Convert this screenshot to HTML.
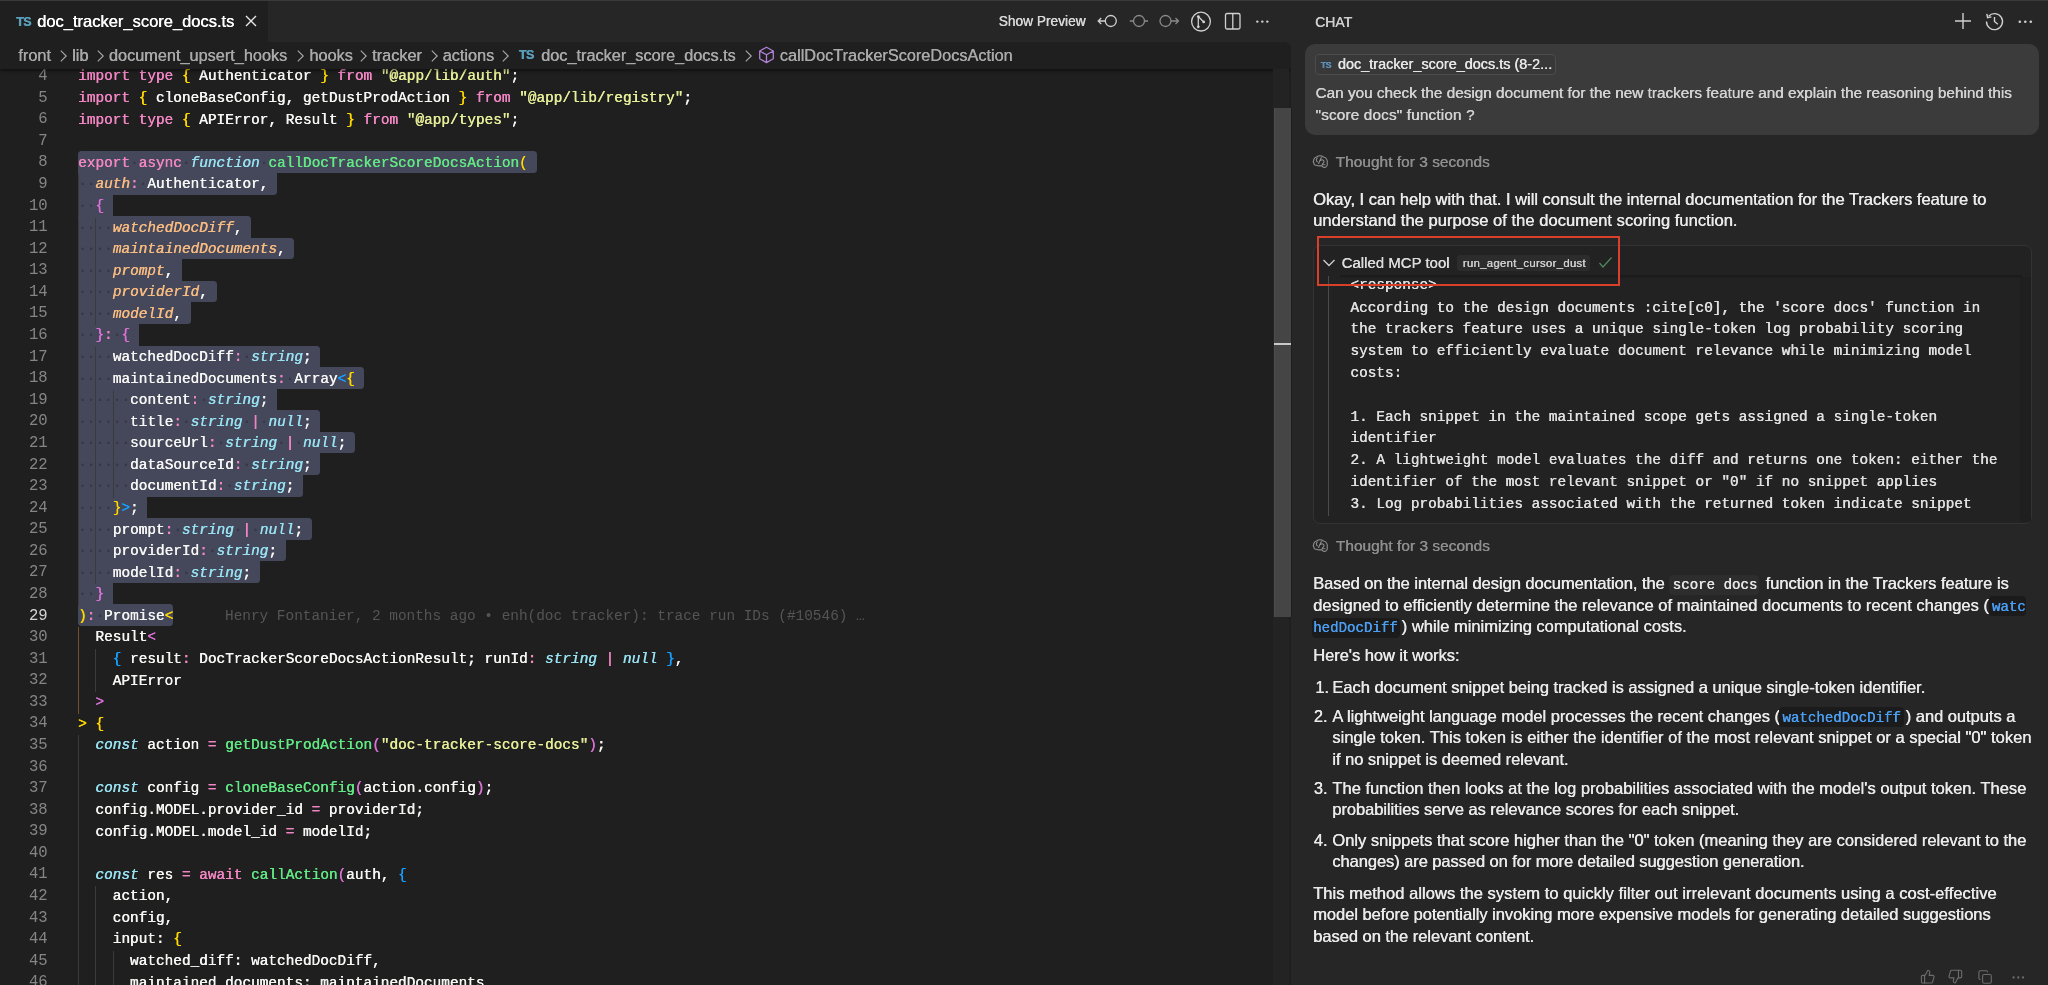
<!DOCTYPE html>
<html><head><meta charset="utf-8"><style>
*{margin:0;padding:0;box-sizing:border-box}
html,body{width:2048px;height:985px;overflow:hidden;background:#262626}
body{position:relative;font-family:"Liberation Sans",sans-serif;will-change:transform}
.t{position:absolute;white-space:pre;text-shadow:0.4px 0 0 currentColor}
.code{position:absolute;left:78.0px;white-space:pre;font-family:"Liberation Mono",monospace;font-size:14.428px;line-height:21.575px;color:#f6f6f4;text-shadow:0.4px 0 0 currentColor}
.ln{position:absolute;left:0;width:47.6px;text-align:right;white-space:pre;font-family:"Liberation Mono",monospace;font-size:15.6px;line-height:21.575px}
.ic1{font-family:"Liberation Mono",monospace;font-size:14px;background:#2e2e2e;border-radius:4px;padding:2px 4px;margin:0 2px;color:#e6e6e6}
.ic2{font-family:"Liberation Mono",monospace;font-size:14px;background:#1a1a1a;border-radius:4px;padding:2px 4px;margin:0 2px;color:#4ca2f5}
</style></head><body>
<div style="position:absolute;left:0;top:0;width:2048px;height:1px;background:#3a3a3a"></div>
<!-- active tab -->
<div style="position:absolute;left:0;top:1px;width:268px;height:42px;background:#1f1f1f"></div>
<!-- editor -->
<div id="editor" style="position:absolute;left:0;top:42px;width:1291px;height:943px;background:#1f1f1f;border-top-right-radius:8px;overflow:hidden">
  <div style="position:absolute;left:-0px;top:-42px;width:1291px;height:985px">
  <div style="position:absolute;left:78.00px;top:151.37px;width:458.82px;height:21.57px;background:#45475a;border-radius:3.5px 3.5px 3.5px 0px"></div><div style="position:absolute;left:78.00px;top:172.95px;width:199.11px;height:21.57px;background:#45475a;border-radius:0px 0px 3.5px 0px"></div><div style="position:absolute;left:78.00px;top:194.52px;width:34.63px;height:21.57px;background:#45475a;border-radius:0px 0px 0px 0px"></div><div style="position:absolute;left:78.00px;top:216.10px;width:173.14px;height:21.57px;background:#45475a;border-radius:0px 3.5px 0px 0px"></div><div style="position:absolute;left:78.00px;top:237.67px;width:216.43px;height:21.57px;background:#45475a;border-radius:0px 3.5px 3.5px 0px"></div><div style="position:absolute;left:78.00px;top:259.25px;width:103.88px;height:21.57px;background:#45475a;border-radius:0px 0px 0px 0px"></div><div style="position:absolute;left:78.00px;top:280.82px;width:138.51px;height:21.57px;background:#45475a;border-radius:0px 3.5px 3.5px 0px"></div><div style="position:absolute;left:78.00px;top:302.40px;width:112.54px;height:21.57px;background:#45475a;border-radius:0px 0px 3.5px 0px"></div><div style="position:absolute;left:78.00px;top:323.97px;width:60.60px;height:21.57px;background:#45475a;border-radius:0px 0px 0px 0px"></div><div style="position:absolute;left:78.00px;top:345.55px;width:242.40px;height:21.57px;background:#45475a;border-radius:0px 3.5px 0px 0px"></div><div style="position:absolute;left:78.00px;top:367.12px;width:285.68px;height:21.57px;background:#45475a;border-radius:0px 3.5px 3.5px 0px"></div><div style="position:absolute;left:78.00px;top:388.70px;width:199.11px;height:21.57px;background:#45475a;border-radius:0px 0px 0px 0px"></div><div style="position:absolute;left:78.00px;top:410.27px;width:242.40px;height:21.57px;background:#45475a;border-radius:0px 3.5px 0px 0px"></div><div style="position:absolute;left:78.00px;top:431.85px;width:277.02px;height:21.57px;background:#45475a;border-radius:0px 3.5px 3.5px 0px"></div><div style="position:absolute;left:78.00px;top:453.42px;width:242.40px;height:21.57px;background:#45475a;border-radius:0px 0px 3.5px 0px"></div><div style="position:absolute;left:78.00px;top:475.00px;width:225.08px;height:21.57px;background:#45475a;border-radius:0px 0px 3.5px 0px"></div><div style="position:absolute;left:78.00px;top:496.57px;width:69.26px;height:21.57px;background:#45475a;border-radius:0px 0px 0px 0px"></div><div style="position:absolute;left:78.00px;top:518.15px;width:233.74px;height:21.57px;background:#45475a;border-radius:0px 3.5px 3.5px 0px"></div><div style="position:absolute;left:78.00px;top:539.72px;width:207.77px;height:21.57px;background:#45475a;border-radius:0px 0px 3.5px 0px"></div><div style="position:absolute;left:78.00px;top:561.30px;width:181.80px;height:21.57px;background:#45475a;border-radius:0px 0px 3.5px 0px"></div><div style="position:absolute;left:78.00px;top:582.87px;width:34.63px;height:21.57px;background:#45475a;border-radius:0px 0px 0px 0px"></div><div style="position:absolute;left:78.00px;top:604.45px;width:95.23px;height:21.57px;background:#45475a;border-radius:0px 3.5px 3.5px 3.5px"></div><div style="position:absolute;left:78.00px;top:174.35px;width:1px;height:21.57px;background:#3b3b3b"></div><div style="position:absolute;left:78.00px;top:195.92px;width:1px;height:21.57px;background:#3b3b3b"></div><div style="position:absolute;left:78.00px;top:217.50px;width:1px;height:21.57px;background:#3b3b3b"></div><div style="position:absolute;left:95.31px;top:217.50px;width:1px;height:21.57px;background:#3b3b3b"></div><div style="position:absolute;left:78.00px;top:239.07px;width:1px;height:21.57px;background:#3b3b3b"></div><div style="position:absolute;left:95.31px;top:239.07px;width:1px;height:21.57px;background:#3b3b3b"></div><div style="position:absolute;left:78.00px;top:260.65px;width:1px;height:21.57px;background:#3b3b3b"></div><div style="position:absolute;left:95.31px;top:260.65px;width:1px;height:21.57px;background:#3b3b3b"></div><div style="position:absolute;left:78.00px;top:282.22px;width:1px;height:21.57px;background:#3b3b3b"></div><div style="position:absolute;left:95.31px;top:282.22px;width:1px;height:21.57px;background:#3b3b3b"></div><div style="position:absolute;left:78.00px;top:303.80px;width:1px;height:21.57px;background:#3b3b3b"></div><div style="position:absolute;left:95.31px;top:303.80px;width:1px;height:21.57px;background:#3b3b3b"></div><div style="position:absolute;left:78.00px;top:325.37px;width:1px;height:21.57px;background:#3b3b3b"></div><div style="position:absolute;left:78.00px;top:346.95px;width:1px;height:21.57px;background:#3b3b3b"></div><div style="position:absolute;left:95.31px;top:346.95px;width:1px;height:21.57px;background:#3b3b3b"></div><div style="position:absolute;left:78.00px;top:368.52px;width:1px;height:21.57px;background:#3b3b3b"></div><div style="position:absolute;left:95.31px;top:368.52px;width:1px;height:21.57px;background:#3b3b3b"></div><div style="position:absolute;left:78.00px;top:390.10px;width:1px;height:21.57px;background:#3b3b3b"></div><div style="position:absolute;left:95.31px;top:390.10px;width:1px;height:21.57px;background:#3b3b3b"></div><div style="position:absolute;left:112.63px;top:390.10px;width:1px;height:21.57px;background:#3b3b3b"></div><div style="position:absolute;left:78.00px;top:411.67px;width:1px;height:21.57px;background:#3b3b3b"></div><div style="position:absolute;left:95.31px;top:411.67px;width:1px;height:21.57px;background:#3b3b3b"></div><div style="position:absolute;left:112.63px;top:411.67px;width:1px;height:21.57px;background:#3b3b3b"></div><div style="position:absolute;left:78.00px;top:433.25px;width:1px;height:21.57px;background:#3b3b3b"></div><div style="position:absolute;left:95.31px;top:433.25px;width:1px;height:21.57px;background:#3b3b3b"></div><div style="position:absolute;left:112.63px;top:433.25px;width:1px;height:21.57px;background:#3b3b3b"></div><div style="position:absolute;left:78.00px;top:454.82px;width:1px;height:21.57px;background:#3b3b3b"></div><div style="position:absolute;left:95.31px;top:454.82px;width:1px;height:21.57px;background:#3b3b3b"></div><div style="position:absolute;left:112.63px;top:454.82px;width:1px;height:21.57px;background:#3b3b3b"></div><div style="position:absolute;left:78.00px;top:476.40px;width:1px;height:21.57px;background:#3b3b3b"></div><div style="position:absolute;left:95.31px;top:476.40px;width:1px;height:21.57px;background:#3b3b3b"></div><div style="position:absolute;left:112.63px;top:476.40px;width:1px;height:21.57px;background:#3b3b3b"></div><div style="position:absolute;left:78.00px;top:497.97px;width:1px;height:21.57px;background:#3b3b3b"></div><div style="position:absolute;left:95.31px;top:497.97px;width:1px;height:21.57px;background:#3b3b3b"></div><div style="position:absolute;left:78.00px;top:519.55px;width:1px;height:21.57px;background:#3b3b3b"></div><div style="position:absolute;left:95.31px;top:519.55px;width:1px;height:21.57px;background:#3b3b3b"></div><div style="position:absolute;left:78.00px;top:541.12px;width:1px;height:21.57px;background:#3b3b3b"></div><div style="position:absolute;left:95.31px;top:541.12px;width:1px;height:21.57px;background:#3b3b3b"></div><div style="position:absolute;left:78.00px;top:562.70px;width:1px;height:21.57px;background:#3b3b3b"></div><div style="position:absolute;left:95.31px;top:562.70px;width:1px;height:21.57px;background:#3b3b3b"></div><div style="position:absolute;left:78.00px;top:584.27px;width:1px;height:21.57px;background:#3b3b3b"></div><div style="position:absolute;left:78.00px;top:627.42px;width:1px;height:21.57px;background:#74502c"></div><div style="position:absolute;left:78.00px;top:649.00px;width:1px;height:21.57px;background:#74502c"></div><div style="position:absolute;left:95.31px;top:649.00px;width:1px;height:21.57px;background:#3b3b3b"></div><div style="position:absolute;left:78.00px;top:670.57px;width:1px;height:21.57px;background:#74502c"></div><div style="position:absolute;left:95.31px;top:670.57px;width:1px;height:21.57px;background:#3b3b3b"></div><div style="position:absolute;left:78.00px;top:692.15px;width:1px;height:21.57px;background:#74502c"></div><div style="position:absolute;left:78.00px;top:735.30px;width:1px;height:21.57px;background:#3b3b3b"></div><div style="position:absolute;left:78.00px;top:756.87px;width:1px;height:21.57px;background:#3b3b3b"></div><div style="position:absolute;left:78.00px;top:778.45px;width:1px;height:21.57px;background:#3b3b3b"></div><div style="position:absolute;left:78.00px;top:800.02px;width:1px;height:21.57px;background:#3b3b3b"></div><div style="position:absolute;left:78.00px;top:821.60px;width:1px;height:21.57px;background:#3b3b3b"></div><div style="position:absolute;left:78.00px;top:843.17px;width:1px;height:21.57px;background:#3b3b3b"></div><div style="position:absolute;left:78.00px;top:864.75px;width:1px;height:21.57px;background:#3b3b3b"></div><div style="position:absolute;left:78.00px;top:886.32px;width:1px;height:21.57px;background:#3b3b3b"></div><div style="position:absolute;left:95.31px;top:886.32px;width:1px;height:21.57px;background:#3b3b3b"></div><div style="position:absolute;left:78.00px;top:907.90px;width:1px;height:21.57px;background:#3b3b3b"></div><div style="position:absolute;left:95.31px;top:907.90px;width:1px;height:21.57px;background:#3b3b3b"></div><div style="position:absolute;left:78.00px;top:929.47px;width:1px;height:21.57px;background:#3b3b3b"></div><div style="position:absolute;left:95.31px;top:929.47px;width:1px;height:21.57px;background:#3b3b3b"></div><div style="position:absolute;left:78.00px;top:951.05px;width:1px;height:21.57px;background:#3b3b3b"></div><div style="position:absolute;left:95.31px;top:951.05px;width:1px;height:21.57px;background:#3b3b3b"></div><div style="position:absolute;left:112.63px;top:951.05px;width:1px;height:21.57px;background:#3b3b3b"></div><div style="position:absolute;left:78.00px;top:972.62px;width:1px;height:21.57px;background:#3b3b3b"></div><div style="position:absolute;left:95.31px;top:972.62px;width:1px;height:21.57px;background:#3b3b3b"></div><div style="position:absolute;left:112.63px;top:972.62px;width:1px;height:21.57px;background:#3b3b3b"></div><div class="code" style="top:66.47px"><span style="color:#f286c4">import</span><span style="color:#f6f6f4"> </span><span style="color:#f286c4">type</span><span style="color:#f6f6f4"> </span><span style="color:#ffd700">{</span><span style="color:#f6f6f4"> Authenticator </span><span style="color:#ffd700">}</span><span style="color:#f6f6f4"> </span><span style="color:#f286c4">from</span><span style="color:#f6f6f4"> </span><span style="color:#e7ee98">&quot;@app/lib/auth&quot;</span><span style="color:#f6f6f4">;</span></div><div class="ln" style="top:66.16px;color:#858585">4</div><div class="code" style="top:88.05px"><span style="color:#f286c4">import</span><span style="color:#f6f6f4"> </span><span style="color:#ffd700">{</span><span style="color:#f6f6f4"> cloneBaseConfig, getDustProdAction </span><span style="color:#ffd700">}</span><span style="color:#f6f6f4"> </span><span style="color:#f286c4">from</span><span style="color:#f6f6f4"> </span><span style="color:#e7ee98">&quot;@app/lib/registry&quot;</span><span style="color:#f6f6f4">;</span></div><div class="ln" style="top:87.74px;color:#858585">5</div><div class="code" style="top:109.62px"><span style="color:#f286c4">import</span><span style="color:#f6f6f4"> </span><span style="color:#f286c4">type</span><span style="color:#f6f6f4"> </span><span style="color:#ffd700">{</span><span style="color:#f6f6f4"> APIError, Result </span><span style="color:#ffd700">}</span><span style="color:#f6f6f4"> </span><span style="color:#f286c4">from</span><span style="color:#f6f6f4"> </span><span style="color:#e7ee98">&quot;@app/types&quot;</span><span style="color:#f6f6f4">;</span></div><div class="ln" style="top:109.31px;color:#858585">6</div><div class="code" style="top:131.20px"></div><div class="ln" style="top:130.89px;color:#858585">7</div><div class="code" style="top:152.77px"><span style="color:#f286c4">export</span><span style="color:#f6f6f4"><span style="color:#363848">·</span></span><span style="color:#f286c4">async</span><span style="color:#f6f6f4"><span style="color:#363848">·</span></span><span style="color:#97e1f1;font-style:italic">function</span><span style="color:#f6f6f4"><span style="color:#363848">·</span></span><span style="color:#62e884">callDocTrackerScoreDocsAction</span><span style="color:#ffd700">(</span></div><div class="ln" style="top:152.46px;color:#858585">8</div><div class="code" style="top:174.35px"><span style="color:#f6f6f4"><span style="color:#363848">·</span><span style="color:#363848">·</span></span><span style="color:#f7bb80;font-style:italic">auth</span><span style="color:#f286c4">:</span><span style="color:#f6f6f4"><span style="color:#363848">·</span>Authenticator,</span></div><div class="ln" style="top:174.04px;color:#858585">9</div><div class="code" style="top:195.92px"><span style="color:#f6f6f4"><span style="color:#363848">·</span><span style="color:#363848">·</span></span><span style="color:#da70d6">{</span></div><div class="ln" style="top:195.61px;color:#858585">10</div><div class="code" style="top:217.50px"><span style="color:#f6f6f4"><span style="color:#363848">·</span><span style="color:#363848">·</span><span style="color:#363848">·</span><span style="color:#363848">·</span></span><span style="color:#f7bb80;font-style:italic">watchedDocDiff</span><span style="color:#f6f6f4">,</span></div><div class="ln" style="top:217.19px;color:#858585">11</div><div class="code" style="top:239.07px"><span style="color:#f6f6f4"><span style="color:#363848">·</span><span style="color:#363848">·</span><span style="color:#363848">·</span><span style="color:#363848">·</span></span><span style="color:#f7bb80;font-style:italic">maintainedDocuments</span><span style="color:#f6f6f4">,</span></div><div class="ln" style="top:238.76px;color:#858585">12</div><div class="code" style="top:260.65px"><span style="color:#f6f6f4"><span style="color:#363848">·</span><span style="color:#363848">·</span><span style="color:#363848">·</span><span style="color:#363848">·</span></span><span style="color:#f7bb80;font-style:italic">prompt</span><span style="color:#f6f6f4">,</span></div><div class="ln" style="top:260.34px;color:#858585">13</div><div class="code" style="top:282.22px"><span style="color:#f6f6f4"><span style="color:#363848">·</span><span style="color:#363848">·</span><span style="color:#363848">·</span><span style="color:#363848">·</span></span><span style="color:#f7bb80;font-style:italic">providerId</span><span style="color:#f6f6f4">,</span></div><div class="ln" style="top:281.91px;color:#858585">14</div><div class="code" style="top:303.80px"><span style="color:#f6f6f4"><span style="color:#363848">·</span><span style="color:#363848">·</span><span style="color:#363848">·</span><span style="color:#363848">·</span></span><span style="color:#f7bb80;font-style:italic">modelId</span><span style="color:#f6f6f4">,</span></div><div class="ln" style="top:303.49px;color:#858585">15</div><div class="code" style="top:325.37px"><span style="color:#f6f6f4"><span style="color:#363848">·</span><span style="color:#363848">·</span></span><span style="color:#da70d6">}</span><span style="color:#f286c4">:</span><span style="color:#f6f6f4"><span style="color:#363848">·</span></span><span style="color:#da70d6">{</span></div><div class="ln" style="top:325.06px;color:#858585">16</div><div class="code" style="top:346.95px"><span style="color:#f6f6f4"><span style="color:#363848">·</span><span style="color:#363848">·</span><span style="color:#363848">·</span><span style="color:#363848">·</span>watchedDocDiff</span><span style="color:#f286c4">:</span><span style="color:#f6f6f4"><span style="color:#363848">·</span></span><span style="color:#97e1f1;font-style:italic">string</span><span style="color:#f6f6f4">;</span></div><div class="ln" style="top:346.64px;color:#858585">17</div><div class="code" style="top:368.52px"><span style="color:#f6f6f4"><span style="color:#363848">·</span><span style="color:#363848">·</span><span style="color:#363848">·</span><span style="color:#363848">·</span>maintainedDocuments</span><span style="color:#f286c4">:</span><span style="color:#f6f6f4"><span style="color:#363848">·</span>Array</span><span style="color:#179fff">&lt;</span><span style="color:#ffd700">{</span></div><div class="ln" style="top:368.21px;color:#858585">18</div><div class="code" style="top:390.10px"><span style="color:#f6f6f4"><span style="color:#363848">·</span><span style="color:#363848">·</span><span style="color:#363848">·</span><span style="color:#363848">·</span><span style="color:#363848">·</span><span style="color:#363848">·</span>content</span><span style="color:#f286c4">:</span><span style="color:#f6f6f4"><span style="color:#363848">·</span></span><span style="color:#97e1f1;font-style:italic">string</span><span style="color:#f6f6f4">;</span></div><div class="ln" style="top:389.79px;color:#858585">19</div><div class="code" style="top:411.67px"><span style="color:#f6f6f4"><span style="color:#363848">·</span><span style="color:#363848">·</span><span style="color:#363848">·</span><span style="color:#363848">·</span><span style="color:#363848">·</span><span style="color:#363848">·</span>title</span><span style="color:#f286c4">:</span><span style="color:#f6f6f4"><span style="color:#363848">·</span></span><span style="color:#97e1f1;font-style:italic">string</span><span style="color:#f6f6f4"><span style="color:#363848">·</span></span><span style="color:#f286c4">|</span><span style="color:#f6f6f4"><span style="color:#363848">·</span></span><span style="color:#97e1f1;font-style:italic">null</span><span style="color:#f6f6f4">;</span></div><div class="ln" style="top:411.36px;color:#858585">20</div><div class="code" style="top:433.25px"><span style="color:#f6f6f4"><span style="color:#363848">·</span><span style="color:#363848">·</span><span style="color:#363848">·</span><span style="color:#363848">·</span><span style="color:#363848">·</span><span style="color:#363848">·</span>sourceUrl</span><span style="color:#f286c4">:</span><span style="color:#f6f6f4"><span style="color:#363848">·</span></span><span style="color:#97e1f1;font-style:italic">string</span><span style="color:#f6f6f4"><span style="color:#363848">·</span></span><span style="color:#f286c4">|</span><span style="color:#f6f6f4"><span style="color:#363848">·</span></span><span style="color:#97e1f1;font-style:italic">null</span><span style="color:#f6f6f4">;</span></div><div class="ln" style="top:432.94px;color:#858585">21</div><div class="code" style="top:454.82px"><span style="color:#f6f6f4"><span style="color:#363848">·</span><span style="color:#363848">·</span><span style="color:#363848">·</span><span style="color:#363848">·</span><span style="color:#363848">·</span><span style="color:#363848">·</span>dataSourceId</span><span style="color:#f286c4">:</span><span style="color:#f6f6f4"><span style="color:#363848">·</span></span><span style="color:#97e1f1;font-style:italic">string</span><span style="color:#f6f6f4">;</span></div><div class="ln" style="top:454.51px;color:#858585">22</div><div class="code" style="top:476.40px"><span style="color:#f6f6f4"><span style="color:#363848">·</span><span style="color:#363848">·</span><span style="color:#363848">·</span><span style="color:#363848">·</span><span style="color:#363848">·</span><span style="color:#363848">·</span>documentId</span><span style="color:#f286c4">:</span><span style="color:#f6f6f4"><span style="color:#363848">·</span></span><span style="color:#97e1f1;font-style:italic">string</span><span style="color:#f6f6f4">;</span></div><div class="ln" style="top:476.09px;color:#858585">23</div><div class="code" style="top:497.97px"><span style="color:#f6f6f4"><span style="color:#363848">·</span><span style="color:#363848">·</span><span style="color:#363848">·</span><span style="color:#363848">·</span></span><span style="color:#ffd700">}</span><span style="color:#179fff">&gt;</span><span style="color:#f6f6f4">;</span></div><div class="ln" style="top:497.66px;color:#858585">24</div><div class="code" style="top:519.55px"><span style="color:#f6f6f4"><span style="color:#363848">·</span><span style="color:#363848">·</span><span style="color:#363848">·</span><span style="color:#363848">·</span>prompt</span><span style="color:#f286c4">:</span><span style="color:#f6f6f4"><span style="color:#363848">·</span></span><span style="color:#97e1f1;font-style:italic">string</span><span style="color:#f6f6f4"><span style="color:#363848">·</span></span><span style="color:#f286c4">|</span><span style="color:#f6f6f4"><span style="color:#363848">·</span></span><span style="color:#97e1f1;font-style:italic">null</span><span style="color:#f6f6f4">;</span></div><div class="ln" style="top:519.24px;color:#858585">25</div><div class="code" style="top:541.12px"><span style="color:#f6f6f4"><span style="color:#363848">·</span><span style="color:#363848">·</span><span style="color:#363848">·</span><span style="color:#363848">·</span>providerId</span><span style="color:#f286c4">:</span><span style="color:#f6f6f4"><span style="color:#363848">·</span></span><span style="color:#97e1f1;font-style:italic">string</span><span style="color:#f6f6f4">;</span></div><div class="ln" style="top:540.81px;color:#858585">26</div><div class="code" style="top:562.70px"><span style="color:#f6f6f4"><span style="color:#363848">·</span><span style="color:#363848">·</span><span style="color:#363848">·</span><span style="color:#363848">·</span>modelId</span><span style="color:#f286c4">:</span><span style="color:#f6f6f4"><span style="color:#363848">·</span></span><span style="color:#97e1f1;font-style:italic">string</span><span style="color:#f6f6f4">;</span></div><div class="ln" style="top:562.39px;color:#858585">27</div><div class="code" style="top:584.27px"><span style="color:#f6f6f4"><span style="color:#363848">·</span><span style="color:#363848">·</span></span><span style="color:#da70d6">}</span></div><div class="ln" style="top:583.96px;color:#858585">28</div><div class="code" style="top:605.85px"><span style="color:#ffd700">)</span><span style="color:#f286c4">:</span><span style="color:#f6f6f4"><span style="color:#363848">·</span>Promise</span><span style="color:#ffd700">&lt;</span></div><div class="ln" style="top:605.54px;color:#d4d4d4">29</div><div class="code" style="top:627.42px"><span style="color:#f6f6f4">  Result</span><span style="color:#da70d6">&lt;</span></div><div class="ln" style="top:627.11px;color:#858585">30</div><div class="code" style="top:649.00px"><span style="color:#f6f6f4">    </span><span style="color:#179fff">{</span><span style="color:#f6f6f4"> result</span><span style="color:#f286c4">:</span><span style="color:#f6f6f4"> DocTrackerScoreDocsActionResult; runId</span><span style="color:#f286c4">:</span><span style="color:#f6f6f4"> </span><span style="color:#97e1f1;font-style:italic">string</span><span style="color:#f6f6f4"> </span><span style="color:#f286c4">|</span><span style="color:#f6f6f4"> </span><span style="color:#97e1f1;font-style:italic">null</span><span style="color:#f6f6f4"> </span><span style="color:#179fff">}</span><span style="color:#f6f6f4">,</span></div><div class="ln" style="top:648.69px;color:#858585">31</div><div class="code" style="top:670.57px"><span style="color:#f6f6f4">    APIError</span></div><div class="ln" style="top:670.26px;color:#858585">32</div><div class="code" style="top:692.15px"><span style="color:#f6f6f4">  </span><span style="color:#da70d6">&gt;</span></div><div class="ln" style="top:691.84px;color:#858585">33</div><div class="code" style="top:713.72px"><span style="color:#ffd700">&gt;</span><span style="color:#f6f6f4"> </span><span style="color:#ffd700">{</span></div><div class="ln" style="top:713.41px;color:#858585">34</div><div class="code" style="top:735.30px"><span style="color:#f6f6f4">  </span><span style="color:#97e1f1;font-style:italic">const</span><span style="color:#f6f6f4"> action </span><span style="color:#f286c4">=</span><span style="color:#f6f6f4"> </span><span style="color:#62e884">getDustProdAction</span><span style="color:#da70d6">(</span><span style="color:#e7ee98">&quot;doc-tracker-score-docs&quot;</span><span style="color:#da70d6">)</span><span style="color:#f6f6f4">;</span></div><div class="ln" style="top:734.99px;color:#858585">35</div><div class="code" style="top:756.87px"></div><div class="ln" style="top:756.56px;color:#858585">36</div><div class="code" style="top:778.45px"><span style="color:#f6f6f4">  </span><span style="color:#97e1f1;font-style:italic">const</span><span style="color:#f6f6f4"> config </span><span style="color:#f286c4">=</span><span style="color:#f6f6f4"> </span><span style="color:#62e884">cloneBaseConfig</span><span style="color:#da70d6">(</span><span style="color:#f6f6f4">action.config</span><span style="color:#da70d6">)</span><span style="color:#f6f6f4">;</span></div><div class="ln" style="top:778.14px;color:#858585">37</div><div class="code" style="top:800.02px"><span style="color:#f6f6f4">  config.MODEL.provider_id </span><span style="color:#f286c4">=</span><span style="color:#f6f6f4"> providerId;</span></div><div class="ln" style="top:799.71px;color:#858585">38</div><div class="code" style="top:821.60px"><span style="color:#f6f6f4">  config.MODEL.model_id </span><span style="color:#f286c4">=</span><span style="color:#f6f6f4"> modelId;</span></div><div class="ln" style="top:821.29px;color:#858585">39</div><div class="code" style="top:843.17px"></div><div class="ln" style="top:842.86px;color:#858585">40</div><div class="code" style="top:864.75px"><span style="color:#f6f6f4">  </span><span style="color:#97e1f1;font-style:italic">const</span><span style="color:#f6f6f4"> res </span><span style="color:#f286c4">=</span><span style="color:#f6f6f4"> </span><span style="color:#f286c4">await</span><span style="color:#f6f6f4"> </span><span style="color:#62e884">callAction</span><span style="color:#da70d6">(</span><span style="color:#f6f6f4">auth, </span><span style="color:#179fff">{</span></div><div class="ln" style="top:864.44px;color:#858585">41</div><div class="code" style="top:886.32px"><span style="color:#f6f6f4">    action,</span></div><div class="ln" style="top:886.01px;color:#858585">42</div><div class="code" style="top:907.90px"><span style="color:#f6f6f4">    config,</span></div><div class="ln" style="top:907.59px;color:#858585">43</div><div class="code" style="top:929.47px"><span style="color:#f6f6f4">    input: </span><span style="color:#ffd700">{</span></div><div class="ln" style="top:929.16px;color:#858585">44</div><div class="code" style="top:951.05px"><span style="color:#f6f6f4">      watched_diff: watchedDocDiff,</span></div><div class="ln" style="top:950.74px;color:#858585">45</div><div class="code" style="top:972.62px"><span style="color:#f6f6f4">      maintained_documents: maintainedDocuments,</span></div><div class="ln" style="top:972.31px;color:#858585">46</div><div class="code" style="top:605.85px;left:225px;color:#555555;text-shadow:none">Henry Fontanier, 2 months ago • enh(doc tracker): trace run IDs (#10546) …</div>
  </div>
  <!-- breadcrumb bar -->
  <div style="position:absolute;left:0;top:0;width:1291px;height:27px;background:#1f1f1f;box-shadow:0 2px 3px rgba(0,0,0,0.45)"></div>
  <div style="position:absolute;left:0;top:-42px;width:1291px;height:985px">
  <svg style="position:absolute;left:59.0px;top:47.6px" width="10" height="16" viewBox="0 0 10 16"><path d="M1.8 2.6 L7.2 8 L1.8 13.4" fill="none" stroke="#a9a9a9" stroke-width="1.15"/></svg><svg style="position:absolute;left:95.8px;top:47.6px" width="10" height="16" viewBox="0 0 10 16"><path d="M1.8 2.6 L7.2 8 L1.8 13.4" fill="none" stroke="#a9a9a9" stroke-width="1.15"/></svg><svg style="position:absolute;left:296.0px;top:47.6px" width="10" height="16" viewBox="0 0 10 16"><path d="M1.8 2.6 L7.2 8 L1.8 13.4" fill="none" stroke="#a9a9a9" stroke-width="1.15"/></svg><svg style="position:absolute;left:359.0px;top:47.6px" width="10" height="16" viewBox="0 0 10 16"><path d="M1.8 2.6 L7.2 8 L1.8 13.4" fill="none" stroke="#a9a9a9" stroke-width="1.15"/></svg><svg style="position:absolute;left:429.5px;top:47.6px" width="10" height="16" viewBox="0 0 10 16"><path d="M1.8 2.6 L7.2 8 L1.8 13.4" fill="none" stroke="#a9a9a9" stroke-width="1.15"/></svg><svg style="position:absolute;left:501.0px;top:47.6px" width="10" height="16" viewBox="0 0 10 16"><path d="M1.8 2.6 L7.2 8 L1.8 13.4" fill="none" stroke="#a9a9a9" stroke-width="1.15"/></svg><svg style="position:absolute;left:743.6px;top:47.6px" width="10" height="16" viewBox="0 0 10 16"><path d="M1.8 2.6 L7.2 8 L1.8 13.4" fill="none" stroke="#a9a9a9" stroke-width="1.15"/></svg>
  </div>
  <!-- scrollbar -->
  <div style="position:absolute;left:1273px;top:27px;width:16px;height:916px;background:#232323"></div>
  <div style="position:absolute;left:1274px;top:66px;width:17px;height:509px;background:#454545;box-shadow:inset 1px 0 0 #4d4d4d"></div>
  <div style="position:absolute;left:1274px;top:300.7px;width:17px;height:2.5px;background:#c8c8c8"></div>
</div>
<div class="t" style="left:16px;top:16px;font-size:12.5px;line-height:12.5px;color:#5a9db8;font-family:'Liberation Sans';font-weight:bold;letter-spacing:-0.6px">TS</div>
<div class="t" style="left:518.8px;top:49px;font-size:12.5px;line-height:12.5px;color:#5a9db8;font-family:'Liberation Sans';font-weight:bold;letter-spacing:-0.6px">TS</div>
<div class="t" style="left:37.00px;top:10.08px;font-size:16.5px;line-height:22px;color:#ffffff;font-family:'Liberation Sans', sans-serif;">doc_tracker_score_docs.ts</div><div class="t" style="left:998.50px;top:11.64px;font-size:13.73px;line-height:20px;color:#d8d8d8;font-family:'Liberation Sans', sans-serif;">Show Preview</div><div class="t" style="left:1315.00px;top:12.15px;font-size:14px;line-height:20px;color:#cfcfcf;font-family:'Liberation Sans', sans-serif;">CHAT</div><div class="t" style="left:18.20px;top:45.15px;font-size:16.3px;line-height:20px;color:#a9a9a9;font-family:'Liberation Sans', sans-serif;">front</div><div class="t" style="left:72.00px;top:45.15px;font-size:16.3px;line-height:20px;color:#a9a9a9;font-family:'Liberation Sans', sans-serif;">lib</div><div class="t" style="left:108.80px;top:45.15px;font-size:16.3px;line-height:20px;color:#a9a9a9;font-family:'Liberation Sans', sans-serif;">document_upsert_hooks</div><div class="t" style="left:309.30px;top:45.15px;font-size:16.3px;line-height:20px;color:#a9a9a9;font-family:'Liberation Sans', sans-serif;">hooks</div><div class="t" style="left:372.00px;top:45.15px;font-size:16.3px;line-height:20px;color:#a9a9a9;font-family:'Liberation Sans', sans-serif;">tracker</div><div class="t" style="left:442.50px;top:45.15px;font-size:16.3px;line-height:20px;color:#a9a9a9;font-family:'Liberation Sans', sans-serif;">actions</div><div class="t" style="left:541.00px;top:45.15px;font-size:16.3px;line-height:20px;color:#a9a9a9;font-family:'Liberation Sans', sans-serif;">doc_tracker_score_docs.ts</div><div class="t" style="left:779.70px;top:45.15px;font-size:16.3px;line-height:20px;color:#a9a9a9;font-family:'Liberation Sans', sans-serif;">callDocTrackerScoreDocsAction</div>
<!-- tab close -->
<svg style="position:absolute;left:245px;top:15px" width="12" height="12" viewBox="0 0 12 12"><path d="M1 1L11 11M11 1L1 11" stroke="#e8e8e8" stroke-width="1.4"/></svg>
<!-- cube icon -->
<svg style="position:absolute;left:758px;top:46px" width="17" height="18" viewBox="0 0 17 18"><path d="M8.5 1.2 L15.3 5 L15.3 12.8 L8.5 16.6 L1.7 12.8 L1.7 5 Z M1.7 5 L8.5 8.8 L15.3 5 M8.5 8.8 L8.5 16.6" fill="none" stroke="#b180d7" stroke-width="1.3" stroke-linejoin="round"/></svg>
<!-- toolbar icons -->
<svg style="position:absolute;left:1096px;top:11px" width="200" height="22" viewBox="0 0 200 22">
  <g fill="none" stroke="#cfcfcf" stroke-width="1.3">
    <circle cx="14.8" cy="10" r="5.5"/><path d="M9.3 10 H2.5 M5.2 7 L2.2 10 L5.2 13"/>
  </g>
  <g fill="none" stroke="#8a8a8a" stroke-width="1.3">
    <circle cx="43" cy="10" r="5.5"/><path d="M33.8 10 H37.5 M48.5 10 H52"/>
    <circle cx="69.5" cy="10" r="5.5"/><path d="M75 10 H82.5 M79.5 7 L82.5 10 L79.5 13"/>
  </g>
  <g fill="none" stroke="#d0d0d0" stroke-width="1.3">
    <circle cx="105" cy="10.6" r="9.4"/>
    <path d="M102.3 5.5 L102.3 16 M102.3 5.5 L107.5 10.8"/>
  </g>
  <g fill="#d0d0d0"><circle cx="102.3" cy="5.6" r="1.4"/><circle cx="107.7" cy="10.9" r="1.4"/><circle cx="102.3" cy="15.8" r="1.4"/></g>
  <g fill="none" stroke="#d0d0d0" stroke-width="1.3">
    <rect x="129.5" y="2.5" width="14.5" height="15.5" rx="1.5"/><path d="M136.8 2.5 V18"/>
  </g>
  <g fill="#d0d0d0"><circle cx="161.3" cy="10.6" r="1.2"/><circle cx="166.3" cy="10.6" r="1.2"/><circle cx="171.3" cy="10.6" r="1.2"/></g>
</svg>
<!-- chat header icons -->
<svg style="position:absolute;left:1950px;top:8px" width="90" height="26" viewBox="0 0 90 26">
  <g fill="none" stroke="#cfcfcf" stroke-width="1.4">
    <path d="M13 5 V21 M5 13 H21"/>
    <path d="M38.6 8.2 A8 8 0 1 1 36.5 13.5"/><path d="M36.8 5.8 L37.6 9.6 L41.4 8.9"/><path d="M44.5 9 V13.5 L47.8 16.3"/>
  </g>
  <g fill="#cfcfcf"><circle cx="69.8" cy="13.7" r="1.3"/><circle cx="75.3" cy="13.7" r="1.3"/><circle cx="80.8" cy="13.7" r="1.3"/></g>
</svg>
<div style="position:absolute;left:1291px;top:108px;width:1px;height:509px;background:#1e1e1e"></div>
<!-- user box -->
<div style="position:absolute;left:1305px;top:44px;width:1734px;height:91px;width:734px;background:#3b3b3b;border-radius:10px"></div>
<div style="position:absolute;left:1315.4px;top:53.9px;width:241px;height:21px;border:1px solid #4c4c4c;border-radius:4px;background:#383838"></div>
<div class="t" style="left:1320.5px;top:60.5px;font-size:9px;line-height:9px;color:#5a8fb8;font-family:'Liberation Sans';font-weight:bold;letter-spacing:-0.6px">TS</div>
<!-- thought icons -->
<svg style="position:absolute;left:1312px;top:155px" width="17" height="14" viewBox="0 0 17 14"><path d="M2 8.5 C0.5 6 2 2.5 5 1.8 C6.5 0.6 9.5 0.5 11.5 2 C14 2.5 15.8 5 15.2 7.5 C15.8 9.5 15 12.3 12.8 12.4 C11.2 12.6 10.3 11.5 10 10.6 C8 11 5.5 10.8 4.5 10.2 C3 10.4 2 9.6 2 8.5 Z M5.2 3.2 C4 4.2 4 6 5.3 6.8 M9.3 2.6 L6.6 8.4 M8.8 5.4 C10 4.2 12.2 4.8 12 6.8 C11.8 8 10.5 8.5 10.2 9.5 L13 9.8" fill="none" stroke="#8e8e8e" stroke-width="1.1" stroke-linejoin="round" stroke-linecap="round"/></svg>
<svg style="position:absolute;left:1312px;top:539.1px" width="17" height="14" viewBox="0 0 17 14"><path d="M2 8.5 C0.5 6 2 2.5 5 1.8 C6.5 0.6 9.5 0.5 11.5 2 C14 2.5 15.8 5 15.2 7.5 C15.8 9.5 15 12.3 12.8 12.4 C11.2 12.6 10.3 11.5 10 10.6 C8 11 5.5 10.8 4.5 10.2 C3 10.4 2 9.6 2 8.5 Z M5.2 3.2 C4 4.2 4 6 5.3 6.8 M9.3 2.6 L6.6 8.4 M8.8 5.4 C10 4.2 12.2 4.8 12 6.8 C11.8 8 10.5 8.5 10.2 9.5 L13 9.8" fill="none" stroke="#8e8e8e" stroke-width="1.1" stroke-linejoin="round" stroke-linecap="round"/></svg>
<!-- MCP box -->
<div style="position:absolute;left:1313px;top:244.5px;width:719px;height:279px;border:1px solid #333;border-radius:7px;background:#222"></div>
<div style="position:absolute;left:1328.3px;top:276px;width:1px;height:240px;background:#4a4a4a"></div>
<div style="position:absolute;left:2020px;top:277px;width:11px;height:245px;background:#1f1f1f"></div>
<div style="position:absolute;left:1456.9px;top:254.9px;width:133px;height:16.6px;background:#2c2c2c;border-radius:3px"></div>
<svg style="position:absolute;left:1322px;top:257px" width="14" height="12" viewBox="0 0 14 12"><path d="M1.5 3 L7 8.5 L12.5 3" fill="none" stroke="#cfcfcf" stroke-width="1.3"/></svg>
<svg style="position:absolute;left:1598px;top:256px" width="15" height="13" viewBox="0 0 15 13"><path d="M1.5 7 L5 11 L13.5 1.5" fill="none" stroke="#4f8860" stroke-width="1.2"/></svg>
<div class="t" style="left:1315.40px;top:82.30px;font-size:15.3px;line-height:22px;color:#d2d2d2;font-family:'Liberation Sans', sans-serif;letter-spacing:0.008px;">Can you check the design document for the new trackers feature and explain the reasoning behind this</div><div class="t" style="left:1315.40px;top:104.00px;font-size:15.3px;line-height:22px;color:#d2d2d2;font-family:'Liberation Sans', sans-serif;letter-spacing:0.163px;">&quot;score docs&quot; function ?</div><div class="t" style="left:1337.80px;top:54.31px;font-size:14.4px;line-height:20px;color:#e6e6e6;font-family:'Liberation Sans', sans-serif;letter-spacing:0.020px;">doc_tracker_score_docs.ts (8-2...</div><div class="t" style="left:1335.50px;top:152.26px;font-size:15.4px;line-height:20px;color:#8e8e8e;font-family:'Liberation Sans', sans-serif;letter-spacing:0.047px;">Thought for 3 seconds</div><div class="t" style="left:1313.00px;top:187.78px;font-size:16.5px;line-height:22px;color:#eaeaea;font-family:'Liberation Sans', sans-serif;letter-spacing:-0.015px;">Okay, I can help with that. I will consult the internal documentation for the Trackers feature to</div><div class="t" style="left:1313.00px;top:209.08px;font-size:16.5px;line-height:22px;color:#eaeaea;font-family:'Liberation Sans', sans-serif;letter-spacing:0.043px;">understand the purpose of the document scoring function.</div><div class="t" style="left:1341.50px;top:252.65px;font-size:14.86px;line-height:20px;color:#dcdcdc;font-family:'Liberation Sans', sans-serif;letter-spacing:0.058px;">Called MCP tool</div><div class="t" style="left:1462.70px;top:254.58px;font-size:11.3px;line-height:16px;color:#cfcfcf;font-family:'Liberation Sans', sans-serif;letter-spacing:0.331px;">run_agent_cursor_dust</div><div class="t" style="left:1350.30px;top:275.47px;font-size:14.383333333333335px;line-height:21px;color:#e0e0e0;font-family:'Liberation Mono', monospace;">&lt;response&gt;</div><div class="t" style="left:1350.30px;top:297.67px;font-size:14.383333333333335px;line-height:21px;color:#e0e0e0;font-family:'Liberation Mono', monospace;">According to the design documents :cite[c0], the &#x27;score docs&#x27; function in</div><div class="t" style="left:1350.30px;top:319.47px;font-size:14.383333333333335px;line-height:21px;color:#e0e0e0;font-family:'Liberation Mono', monospace;">the trackers feature uses a unique single-token log probability scoring</div><div class="t" style="left:1350.30px;top:341.27px;font-size:14.383333333333335px;line-height:21px;color:#e0e0e0;font-family:'Liberation Mono', monospace;">system to efficiently evaluate document relevance while minimizing model</div><div class="t" style="left:1350.30px;top:363.07px;font-size:14.383333333333335px;line-height:21px;color:#e0e0e0;font-family:'Liberation Mono', monospace;">costs:</div><div class="t" style="left:1350.30px;top:406.67px;font-size:14.383333333333335px;line-height:21px;color:#e0e0e0;font-family:'Liberation Mono', monospace;">1. Each snippet in the maintained scope gets assigned a single-token</div><div class="t" style="left:1350.30px;top:428.47px;font-size:14.383333333333335px;line-height:21px;color:#e0e0e0;font-family:'Liberation Mono', monospace;">identifier</div><div class="t" style="left:1350.30px;top:450.27px;font-size:14.383333333333335px;line-height:21px;color:#e0e0e0;font-family:'Liberation Mono', monospace;">2. A lightweight model evaluates the diff and returns one token: either the</div><div class="t" style="left:1350.30px;top:472.07px;font-size:14.383333333333335px;line-height:21px;color:#e0e0e0;font-family:'Liberation Mono', monospace;">identifier of the most relevant snippet or &quot;0&quot; if no snippet applies</div><div class="t" style="left:1350.30px;top:493.87px;font-size:14.383333333333335px;line-height:21px;color:#e0e0e0;font-family:'Liberation Mono', monospace;">3. Log probabilities associated with the returned token indicate snippet</div><div class="t" style="left:1335.70px;top:536.36px;font-size:15.4px;line-height:20px;color:#8e8e8e;font-family:'Liberation Sans', sans-serif;letter-spacing:0.047px;">Thought for 3 seconds</div><div class="t" style="left:1313.00px;top:572.18px;font-size:16.5px;line-height:22px;color:#eaeaea;font-family:'Liberation Sans', sans-serif;letter-spacing:-0.054px;">Based on the internal design documentation, the</div><div style="position:absolute;left:1669.30px;top:574.70px;width:90.20px;height:20.00px;background:#2d2d2d;border-radius:4px"></div><div class="t" style="left:1672.60px;top:575.14px;font-size:14.12px;line-height:20px;color:#e6e6e6;font-family:'Liberation Mono', monospace;">score docs</div><div class="t" style="left:1765.40px;top:572.18px;font-size:16.5px;line-height:22px;color:#eaeaea;font-family:'Liberation Sans', sans-serif;letter-spacing:0.007px;">function in the Trackers feature is</div><div class="t" style="left:1313.00px;top:593.68px;font-size:16.5px;line-height:22px;color:#eaeaea;font-family:'Liberation Sans', sans-serif;letter-spacing:0.011px;">designed to efficiently determine the relevance of maintained documents to recent changes (</div><div style="position:absolute;left:1988.50px;top:596.20px;width:37.20px;height:20.00px;background:#1b1b1b;border-radius:4px"></div><div class="t" style="left:1991.80px;top:596.64px;font-size:14.12px;line-height:20px;color:#4b9ef2;font-family:'Liberation Mono', monospace;">watc</div><div style="position:absolute;left:1311.70px;top:617.70px;width:88.20px;height:20.00px;background:#1b1b1b;border-radius:4px"></div><div class="t" style="left:1313.00px;top:618.14px;font-size:14.12px;line-height:20px;color:#4b9ef2;font-family:'Liberation Mono', monospace;">hedDocDiff</div><div class="t" style="left:1401.60px;top:615.18px;font-size:16.5px;line-height:22px;color:#eaeaea;font-family:'Liberation Sans', sans-serif;letter-spacing:-0.008px;">) while minimizing computational costs.</div><div class="t" style="left:1313.00px;top:644.08px;font-size:16.5px;line-height:22px;color:#eaeaea;font-family:'Liberation Sans', sans-serif;letter-spacing:-0.037px;">Here&#x27;s how it works:</div><div class="t" style="left:1315.20px;top:676.28px;font-size:16.5px;line-height:22px;color:#eaeaea;font-family:'Liberation Sans', sans-serif;">1.</div><div class="t" style="left:1332.20px;top:676.28px;font-size:16.5px;line-height:22px;color:#eaeaea;font-family:'Liberation Sans', sans-serif;letter-spacing:-0.030px;">Each document snippet being tracked is assigned a unique single-token identifier.</div><div class="t" style="left:1313.70px;top:704.68px;font-size:16.5px;line-height:22px;color:#eaeaea;font-family:'Liberation Sans', sans-serif;">2.</div><div class="t" style="left:1332.20px;top:704.68px;font-size:16.5px;line-height:22px;color:#eaeaea;font-family:'Liberation Sans', sans-serif;letter-spacing:-0.032px;">A lightweight language model processes the recent changes (</div><div style="position:absolute;left:1779.00px;top:707.20px;width:124.90px;height:20.00px;background:#1b1b1b;border-radius:4px"></div><div class="t" style="left:1782.30px;top:707.64px;font-size:14.12px;line-height:20px;color:#4b9ef2;font-family:'Liberation Mono', monospace;">watchedDocDiff</div><div class="t" style="left:1905.60px;top:704.68px;font-size:16.5px;line-height:22px;color:#eaeaea;font-family:'Liberation Sans', sans-serif;letter-spacing:-0.034px;">) and outputs a</div><div class="t" style="left:1332.20px;top:726.18px;font-size:16.5px;line-height:22px;color:#eaeaea;font-family:'Liberation Sans', sans-serif;letter-spacing:0.026px;">single token. This token is either the identifier of the most relevant snippet or a special &quot;0&quot; token</div><div class="t" style="left:1332.20px;top:747.58px;font-size:16.5px;line-height:22px;color:#eaeaea;font-family:'Liberation Sans', sans-serif;letter-spacing:-0.043px;">if no snippet is deemed relevant.</div><div class="t" style="left:1313.70px;top:776.88px;font-size:16.5px;line-height:22px;color:#eaeaea;font-family:'Liberation Sans', sans-serif;">3.</div><div class="t" style="left:1332.20px;top:776.88px;font-size:16.5px;line-height:22px;color:#eaeaea;font-family:'Liberation Sans', sans-serif;letter-spacing:0.024px;">The function then looks at the log probabilities associated with the model&#x27;s output token. These</div><div class="t" style="left:1332.20px;top:798.38px;font-size:16.5px;line-height:22px;color:#eaeaea;font-family:'Liberation Sans', sans-serif;letter-spacing:-0.073px;">probabilities serve as relevance scores for each snippet.</div><div class="t" style="left:1313.70px;top:828.68px;font-size:16.5px;line-height:22px;color:#eaeaea;font-family:'Liberation Sans', sans-serif;">4.</div><div class="t" style="left:1332.20px;top:828.68px;font-size:16.5px;line-height:22px;color:#eaeaea;font-family:'Liberation Sans', sans-serif;letter-spacing:-0.001px;">Only snippets that score higher than the &quot;0&quot; token (meaning they are considered relevant to the</div><div class="t" style="left:1332.20px;top:850.18px;font-size:16.5px;line-height:22px;color:#eaeaea;font-family:'Liberation Sans', sans-serif;letter-spacing:-0.076px;">changes) are passed on for more detailed suggestion generation.</div><div class="t" style="left:1313.00px;top:881.98px;font-size:16.5px;line-height:22px;color:#eaeaea;font-family:'Liberation Sans', sans-serif;letter-spacing:0.045px;">This method allows the system to quickly filter out irrelevant documents using a cost-effective</div><div class="t" style="left:1313.00px;top:903.48px;font-size:16.5px;line-height:22px;color:#eaeaea;font-family:'Liberation Sans', sans-serif;letter-spacing:-0.034px;">model before potentially invoking more expensive models for generating detailed suggestions</div><div class="t" style="left:1313.00px;top:924.98px;font-size:16.5px;line-height:22px;color:#eaeaea;font-family:'Liberation Sans', sans-serif;letter-spacing:-0.034px;">based on the relevant content.</div>
<div style="position:absolute;left:1339.8px;top:274.5px;width:682px;height:3px;background:linear-gradient(#1a1a1a,#1f1f1f);"></div>
<!-- red highlight -->
<div style="position:absolute;left:1317.4px;top:235.8px;width:302.6px;height:49.8px;border:2px solid #d9402b"></div>
<!-- footer icons -->
<svg style="position:absolute;left:1918px;top:966px" width="112" height="19" viewBox="0 0 112 19">
  <g fill="none" stroke="#6c6c6c" stroke-width="1.75" stroke-linejoin="round" stroke-linecap="round">
    <g transform="translate(2.12 2.92) scale(0.64)"><path d="M7 10v12"/><path d="M15 5.88 14 10h5.83a2 2 0 0 1 1.92 2.56l-2.33 8A2 2 0 0 1 17.5 22H4a2 2 0 0 1-2-2v-8a2 2 0 0 1 2-2h2.76a2 2 0 0 0 1.79-1.11L12 2a3.13 3.13 0 0 1 3 3.88Z"/></g>
    <g transform="translate(29.6 2.92) scale(0.64)"><path d="M17 14V2"/><path d="M9 18.12 10 14H4.17a2 2 0 0 1-1.92-2.56l2.33-8A2 2 0 0 1 6.5 2H20a2 2 0 0 1 2 2v8a2 2 0 0 1-2 2h-2.76a2 2 0 0 0-1.79 1.11L12 22a3.13 3.13 0 0 1-3-3.88Z"/></g>
    <g transform="translate(59.66 3.56) scale(0.62)"><rect x="8" y="8" width="14" height="14" rx="2.5"/><path d="M4 16c-1.1 0-2-.9-2-2V4c0-1.1.9-2 2-2h10c1.1 0 2 .9 2 2"/></g>
  </g>
  <g fill="#6c6c6c"><circle cx="95.6" cy="11.5" r="1.15"/><circle cx="100.3" cy="11.5" r="1.15"/><circle cx="105" cy="11.5" r="1.15"/></g>
</svg>
</body></html>
